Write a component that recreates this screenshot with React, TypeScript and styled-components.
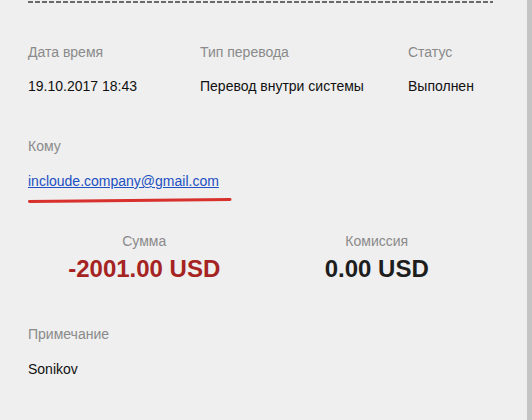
import * as React from 'react';
import styled, { createGlobalStyle } from 'styled-components';

const GlobalStyle = createGlobalStyle`
  html, body {
    margin: 0;
    padding: 0;
    background: #efefef;
  }
  body {
    font-family: "Liberation Sans", Arial, sans-serif;
  }
`;

const Page = styled.div`
  width: 527px;
  height: 420px;
  border-right: 5px solid #c4c4c4;
  background: #efefef;
  overflow: hidden;
`;

const Content = styled.div`
  padding: 0 34px 0 28px;
`;

const DashLine = styled.div`
  height: 2px;
  margin-top: 1px;
  background: repeating-linear-gradient(90deg, #6a6a6a 0 5px, transparent 5px 7px);
`;

const InfoGrid = styled.div`
  display: grid;
  grid-template-columns: 172px 208px auto;
  margin-top: 41px;
  row-gap: 18px;
`;

const Label = styled.div`
  font-size: 14px;
  line-height: 16px;
  color: #8a8a8a;
`;

const Value = styled.div`
  font-size: 14px;
  line-height: 16px;
  color: #111;
`;

const Section = styled.div<{ top: number }>`
  margin-top: ${(p) => p.top}px;
  display: flex;
  flex-direction: column;
  gap: 19px;
`;

const EmailWrap = styled.div`
  display: flex;
  flex-direction: column;
  align-items: flex-start;
`;

const EmailLink = styled.a`
  font-size: 14px;
  line-height: 16px;
  color: #2150c2;
  text-decoration: underline;
`;

const Scribble = styled.svg`
  display: block;
  margin-top: 9px;
`;

const Amounts = styled.div`
  display: grid;
  grid-template-columns: 1fr 1fr;
  margin-top: 30px;
`;

const AmountCol = styled.div`
  display: flex;
  flex-direction: column;
  align-items: center;
  gap: 6px;
`;

const Amount = styled.div<{ negative?: boolean }>`
  font-size: 24px;
  line-height: 28px;
  font-weight: bold;
  color: ${(p) => (p.negative ? '#a52322' : '#1d1d1d')};
`;

export default function App() {
  return (
    <Page>
      <GlobalStyle />
      <Content>
        <DashLine />
        <InfoGrid>
          <Label>Дата время</Label>
          <Label>Тип перевода</Label>
          <Label>Статус</Label>
          <Value>19.10.2017 18:43</Value>
          <Value>Перевод внутри системы</Value>
          <Value>Выполнен</Value>
        </InfoGrid>
        <Section top={44}>
          <Label>Кому</Label>
          <EmailWrap>
            <EmailLink href="#">incloude.company@gmail.com</EmailLink>
            <Scribble width="204" height="5" viewBox="0 0 204 5">
              <path d="M1.5 3.4 Q100 2.6 202 1.6" stroke="#d8302c" strokeWidth="3" strokeLinecap="round" fill="none" />
            </Scribble>
          </EmailWrap>
        </Section>
        <Amounts>
          <AmountCol>
            <Label>Сумма</Label>
            <Amount negative>-2001.00 USD</Amount>
          </AmountCol>
          <AmountCol>
            <Label>Комиссия</Label>
            <Amount>0.00 USD</Amount>
          </AmountCol>
        </Amounts>
        <Section top={43}>
          <Label>Примечание</Label>
          <Value>Sonikov</Value>
        </Section>
      </Content>
    </Page>
  );
}
